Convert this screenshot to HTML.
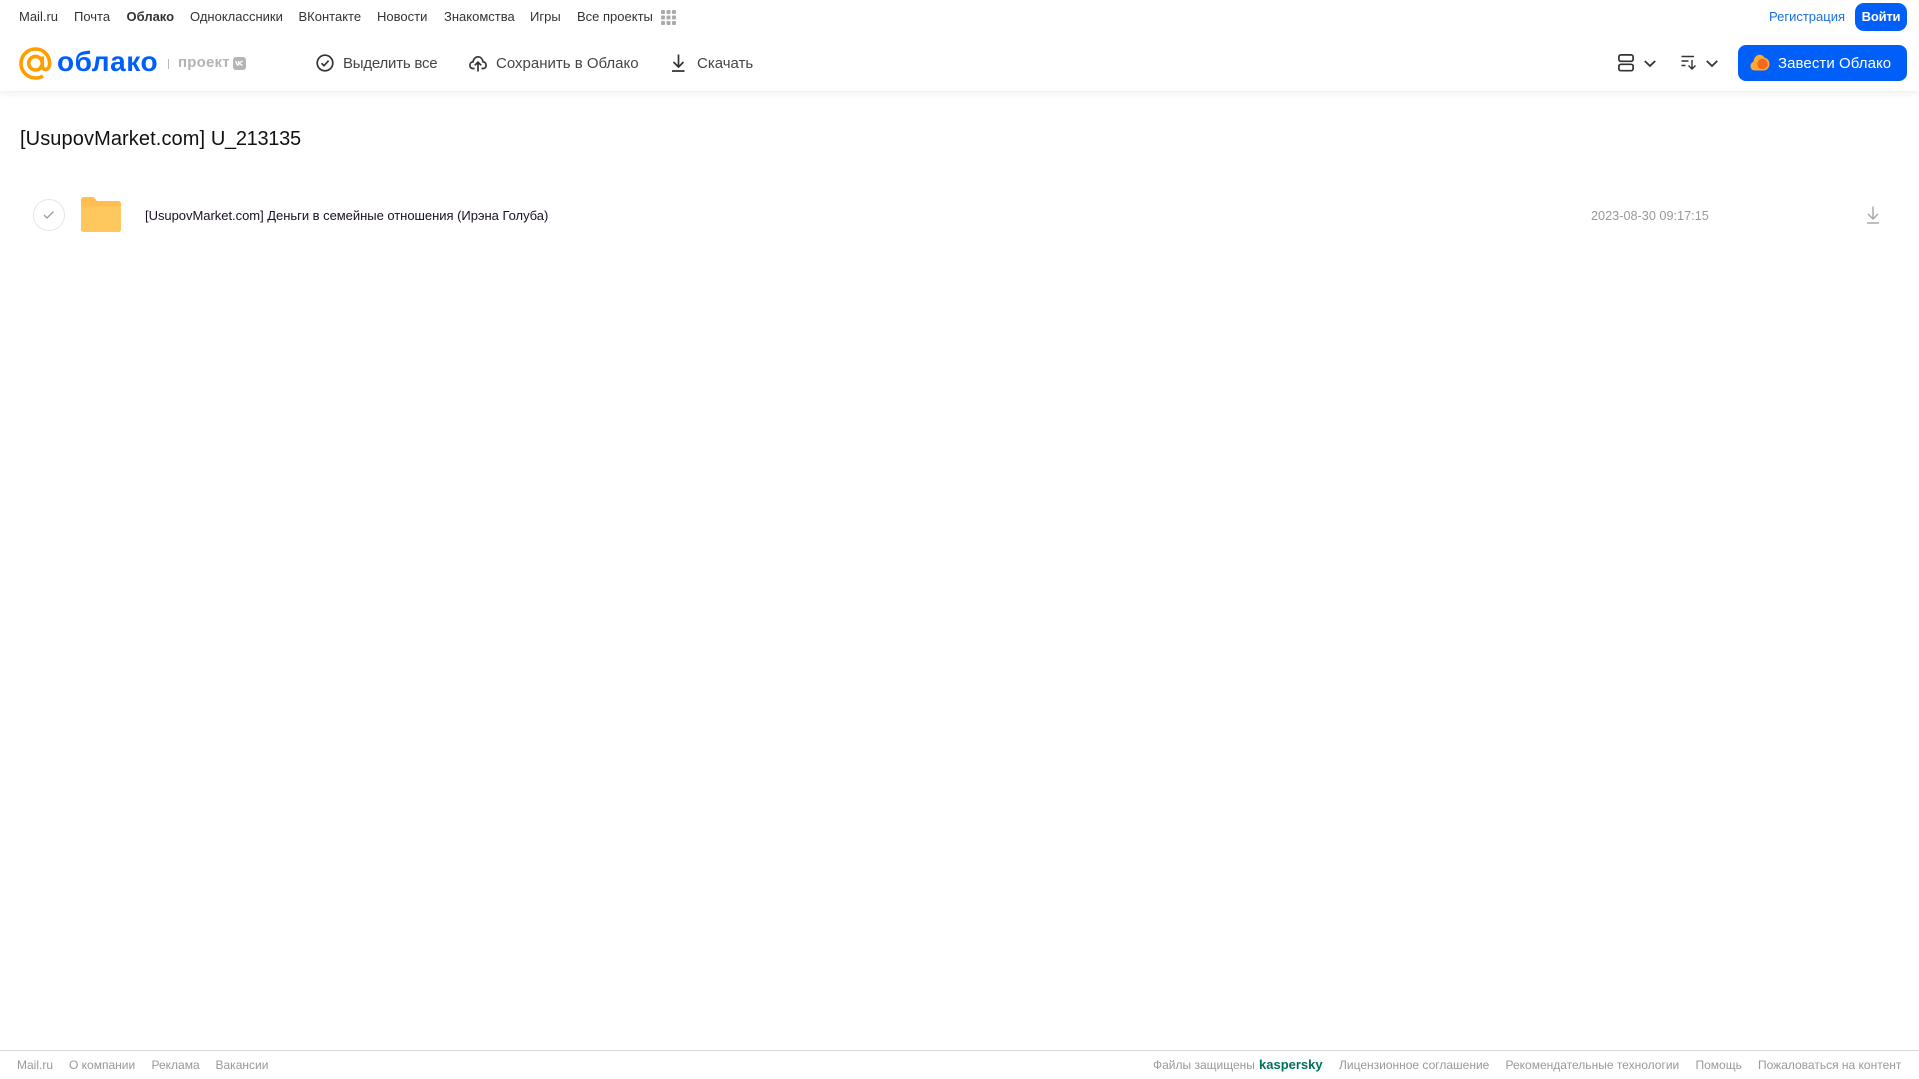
<!DOCTYPE html>
<html lang="ru"><head><meta charset="utf-8"><title>Облако</title>
<style>
html,body{margin:0;padding:0;background:#fff;width:1919px;height:1079px;overflow:hidden}
body{position:relative;font-family:"Liberation Sans",sans-serif}
.t{position:absolute;white-space:nowrap;line-height:20px}
.n{font-size:13px;color:#333;top:6.5px;letter-spacing:0}
.b{font-size:15px;color:#454545;top:54px;letter-spacing:0}
.f{font-size:12px;color:#999;top:1055px}
svg{position:absolute;overflow:visible}
</style></head><body>
<div style="position:absolute;left:0;top:0;width:1919px;height:91px;background:#fff;box-shadow:0 1px 8px rgba(0,0,0,.09)"></div>

<span class="t n" style="left:19px">Mail.ru</span>
<span class="t n" style="left:74px">Почта</span>
<span class="t n" style="left:126.5px;font-weight:700">Облако</span>
<span class="t n" style="left:190px">Одноклассники</span>
<span class="t n" style="left:298.5px">ВКонтакте</span>
<span class="t n" style="left:377px">Новости</span>
<span class="t n" style="left:444px">Знакомства</span>
<span class="t n" style="left:530px">Игры</span>
<span class="t n" style="left:577px">Все проекты</span>
<svg style="left:661px;top:10px" width="15" height="15" fill="#aaa"><rect x="0" y="0" width="4" height="4" rx="1"/><rect x="5.5" y="0" width="4" height="4" rx="1"/><rect x="11" y="0" width="4" height="4" rx="1"/><rect x="0" y="5.5" width="4" height="4" rx="1"/><rect x="5.5" y="5.5" width="4" height="4" rx="1"/><rect x="11" y="5.5" width="4" height="4" rx="1"/><rect x="0" y="11" width="4" height="4" rx="1"/><rect x="5.5" y="11" width="4" height="4" rx="1"/><rect x="11" y="11" width="4" height="4" rx="1"/></svg>

<span class="t n" style="left:1769px;color:#1a6fdc">Регистрация</span>
<div style="position:absolute;left:1855px;top:3px;width:52px;height:28px;border-radius:9px;background:#005ff9;color:#fff;font-size:13px;font-weight:700;letter-spacing:-.2px;line-height:27px;text-align:center">Войти</div>

<!-- logo -->
<svg style="left:19px;top:47px" width="33" height="33" viewBox="0 0 33 33" fill="none" stroke="#ff9e00" stroke-width="3.6"><circle cx="16.5" cy="16.2" r="6.8"/><path d="M23.3 9.5v9.5c0 5 7.3 5 7.3-2.500C30.600 8 24 2 16.500 2 8.500 2 2 8.500 2 16.500S8.500 31 16.500 31c3 0 5.300-.7 7.500-2"/></svg>
<span class="t" style="left:57px;top:46px;font-size:28px;line-height:32px;font-weight:700;color:#005ff9;letter-spacing:.55px">облако</span>
<div style="position:absolute;left:168px;top:59px;width:1px;height:10px;background:#bbb"></div>
<span class="t" style="left:178px;top:53px;font-size:15px;font-weight:700;color:#b3b3b3;letter-spacing:.2px">проект</span>
<div style="position:absolute;left:233px;top:57px;width:13px;height:13px;border-radius:3px;background:#b5b5b5"></div>
<svg style="left:235px;top:60px" width="9" height="7" fill="none" stroke="#fff" stroke-width="1.300"><path d="M.5 1l2 4.500M3.500 1v4.500M7.500 1L4 3.200l3.500 2.300"/></svg>

<!-- toolbar -->
<svg style="left:316px;top:54px" width="18" height="18" fill="none" stroke="#333" stroke-width="1.700"><circle cx="9" cy="9" r="7.800"/><path d="M5.500 9.300l2.500 2.400 4.600-5"/></svg>
<span class="t b" style="left:343px;letter-spacing:-.22px">Выделить все</span>
<svg style="left:469px;top:54px" width="18" height="18" fill="none" stroke="#333" stroke-width="1.700"><path d="M5.500 14.500H4C2 14.500 .9 13 .9 11.200c0-1.800 1.300-3.200 3-3.300C4.500 5 6.500 2.800 9 2.800s4.500 2 5.100 5.100c1.800.1 3 1.500 3 3.300 0 1.800-1.200 3.300-3 3.300h-1.600"/><path d="M9 17.500V8.500M5.800 11.300L9 8.200l3.200 3.100"/></svg>
<span class="t b" style="left:496px">Сохранить в Облако</span>
<svg style="left:671px;top:54px" width="15" height="18" fill="none" stroke="#333" stroke-width="1.700"><path d="M7.500 .5v12.500M2.500 8l5 5 5-5M1 17h12.500"/></svg>
<span class="t b" style="left:697px">Скачать</span>

<svg style="left:1618px;top:54px" width="16" height="18" fill="none" stroke="#333" stroke-width="1.700"><rect x=".9" y=".9" width="14.200" height="6.400" rx="2"/><rect x=".9" y="10.300" width="14.200" height="6.400" rx="2"/></svg>
<svg style="left:1644px;top:60px" width="12" height="8" fill="none" stroke="#333" stroke-width="1.800"><path d="M.8 1l5.200 5 5.200-5"/></svg>
<svg style="left:1681px;top:55px" width="16" height="15" fill="none" stroke="#333" stroke-width="1.400"><path d="M.5 1.500h12.500M.5 6h7M.5 10.500h4M11 5v9M7.500 10.500L11 14l3.500-3.500"/></svg>
<svg style="left:1706px;top:60px" width="12" height="8" fill="none" stroke="#333" stroke-width="1.800"><path d="M.8 1l5.200 5 5.200-5"/></svg>

<div style="position:absolute;left:1738px;top:45px;width:169px;height:36px;border-radius:8px;background:#005ff9"></div>
<svg style="left:1750px;top:54px" width="20" height="18" viewBox="0 0 20 18"><path d="M5 16.500C2 16.500 .5 14.500.5 12c0-2.200 1.300-3.800 3-4.300C4 3.500 6.500 .8 9.500.8c2.200 0 4 1.100 5 3 3 .5 5 3 5 6.200 0 3.700-2.500 6.500-6 6.500z" fill="#ffa930"/><circle cx="12.500" cy="10" r="5.200" fill="#f4681f"/></svg>
<span class="t" style="left:1778px;top:54px;font-size:15px;color:#fff;letter-spacing:.07px">Завести Облако</span>

<!-- title -->
<span class="t" style="left:20px;top:126px;font-size:20px;line-height:26px;color:#111"><span style="letter-spacing:.1px">[UsupovMarket.com] </span><span style="letter-spacing:-.3px">U_213135</span></span>

<!-- row -->
<div style="position:absolute;left:33px;top:199px;width:30px;height:30px;border:1px solid #e6e6e6;border-radius:50%"></div>
<svg style="left:43px;top:210px" width="12" height="10" fill="none" stroke="#999" stroke-width="1.300"><path d="M1 5l3 3 6.500-6.500"/></svg>
<svg style="left:81px;top:197px" width="40" height="35" viewBox="0 0 40 35"><path d="M0 3.500C0 1.500 1.200 0 3 0h8c1.500 0 2.500.8 3.500 2l1.300 2H37c2 0 3 1.200 3 3v25c0 2-1.200 3-3 3H3c-2 0-3-1.200-3-3z" fill="#ffbe4f"/><path d="M0 9.500h40V32c0 2-1.200 3-3 3H3c-2 0-3-1.200-3-3z" fill="#ffc85f"/></svg>
<span class="t" style="left:145px;top:206px;font-size:13px;color:#1a0f25;letter-spacing:-.03px">[UsupovMarket.com] Деньги в семейные отношения (Ирэна Голуба)</span>
<span class="t" style="left:1591px;top:206px;font-size:12.700px;color:#999">2023-08-30 09:17:15</span>
<svg style="left:1866px;top:206px" width="14" height="18" fill="none" stroke="#aaa" stroke-width="1.500"><path d="M7 .5v12M2 8l5 5 5-5M1 17h12"/></svg>

<!-- footer -->
<div style="position:absolute;left:0;top:1050px;width:1919px;height:1px;background:#d9d9d9"></div>
<span class="t f" style="left:17px">Mail.ru</span>
<span class="t f" style="left:69px">О компании</span>
<span class="t f" style="left:151.500px">Реклама</span>
<span class="t f" style="left:215.500px">Вакансии</span>
<span class="t f" style="left:1153px">Файлы защищены</span>
<span class="t f" style="left:1259px;font-weight:700;font-size:13px;color:#00715c">kaspersky</span>
<span class="t f" style="left:1339px">Лицензионное соглашение</span>
<span class="t f" style="left:1505.500px">Рекомендательные технологии</span>
<span class="t f" style="left:1695.500px">Помощь</span>
<span class="t f" style="left:1758px">Пожаловаться на контент</span>
</body></html>
